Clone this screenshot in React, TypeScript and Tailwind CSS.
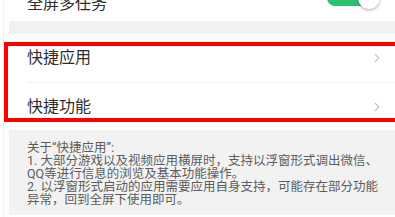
import React from "react";

const font = { fontFamily: '"Roboto", "Noto Sans CJK SC", sans-serif' };

function Chevron() {
  return (
    <svg width="6" height="10" viewBox="0 0 6 10" className="shrink-0">
      <path d="M1 1 L4.6 5 L1 9" fill="none" stroke="#b3b3b3" strokeWidth="1.1" />
    </svg>
  );
}

const lines = [
  "关于“快捷应用”:",
  "1. 大部分游戏以及视频应用横屏时，支持以浮窗形式调出微信、",
  "QQ等进行信息的浏览及基本功能操作。",
  "2. 以浮窗形式启动的应用需要应用自身支持，可能存在部分功能",
  "异常，回到全屏下使用即可。",
];

export default function App() {
  return (
    <div
      className="relative w-[395px] h-[217px] overflow-hidden bg-white"
      style={font}
    >
      <div className="flex h-full">
        {/* left gutter with faint line */}
        <div className="w-[10px] shrink-0 flex">
          <div className="ml-[3px] w-px h-full bg-[#efefef]" />
        </div>
        <div className="flex-1 flex flex-col -ml-px">
          {/* top row (cut off) */}
          <div className="-mt-[13px] h-[34px] flex items-center justify-between pl-[18px] pr-[15px] bg-white">
            <span className="text-[16px] leading-[16px] text-[#2e2e2e]">全屏多任务</span>
            <div className="-mt-[12px] relative w-[53px] h-[22px] flex items-center">
              <div className="w-[46px] h-[16px] rounded-full bg-[#2fbf71]" />
              <div className="absolute right-0 top-0 w-[22px] h-[22px] rounded-full bg-white shadow-[0_1px_3px_rgba(0,0,0,0.35)]" />
            </div>
          </div>
          <div className="h-[13px] bg-[#f1f1f1]" />
          {/* rows */}
          <div className="flex flex-col bg-white">
            <div className="h-[48px] flex items-center justify-between pl-[18px] pr-[15px]">
              <span className="text-[16px] leading-[16px] text-[#2e2e2e]">快捷应用</span>
              <Chevron />
            </div>
            <div className="ml-[18px] h-px bg-[#f0f0f0]" />
            <div className="h-[47px] flex items-center justify-between pl-[18px] pr-[15px]">
              <span className="text-[16px] leading-[16px] text-[#2e2e2e]">快捷功能</span>
              <Chevron />
            </div>
          </div>
          {/* note */}
          <div className="h-[85px] bg-[#f2f2f2] pl-[18px] pt-[11px] text-[12.5px] leading-[13px] text-[#5c5c5c] whitespace-nowrap">
            {lines.map((l) => (
              <p key={l}>{l}</p>
            ))}
          </div>
        </div>
      </div>
      {/* red annotation box */}
      <div className="absolute left-[4px] top-[42px] w-[420px] h-[80px] border-4 border-[#ff0000]" />
    </div>
  );
}
